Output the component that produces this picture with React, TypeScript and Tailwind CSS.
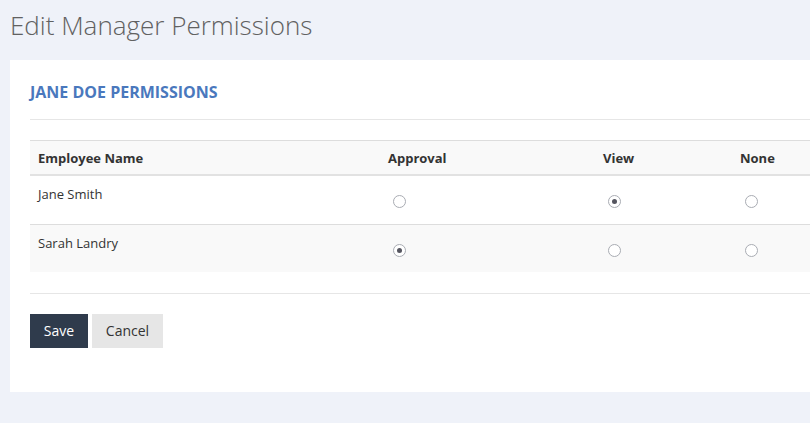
import React from "react";

const Radio = ({ checked }: { checked?: boolean }) => (
  <div className="ml-[5px] mt-[11px] w-[13px] h-[13px] rounded-full border border-[#a9acb3] bg-white flex items-center justify-center">
    {checked && <div className="w-[5px] h-[5px] rounded-full bg-[#55555f]" />}
  </div>
);

const rows = [
  { name: "Jane Smith", sel: 1, bg: "bg-white" },
  { name: "Sarah Landry", sel: 0, bg: "bg-[#f9f9f9]" },
];

export default function App() {
  return (
    <div
      className="w-[810px] h-[423px] overflow-hidden bg-[#eff2f9] text-[#333]"
      style={{ fontFamily: '"Open Sans", sans-serif' }}
    >
      <h1 className="pl-[10px] pt-[6px] h-[60px] text-[26px] font-light text-[#616161] leading-[38px]">
        Edit Manager Permissions
      </h1>
      <div className="ml-[10px] w-[900px] h-[332px] bg-white px-[20px] pt-[21px]">
        <div className="h-[38px] border-b border-[#e6e6e6] box-content text-[16px] font-bold text-[#4a78bd] leading-[22px]">
          JANE DOE PERMISSIONS
        </div>
        <div className="mt-[20px] border-t border-[#dddddd]">
          <div className="flex h-[35px] bg-[#f9f9f9] border-b-2 border-[#e2e2e2] text-[13px] font-bold leading-[18px] text-[#333]">
            <div className="w-[350px] pl-[8px] pt-[8px]">Employee Name</div>
            <div className="w-[215px] pl-[8px] pt-[8px]">Approval</div>
            <div className="w-[137px] pl-[8px] pt-[8px]">View</div>
            <div className="w-[150px] pl-[8px] pt-[8px]">None</div>
          </div>
          {rows.map((r, i) => (
            <div
              key={r.name}
              className={`flex h-[48px] ${r.bg} ${i > 0 ? "border-t border-[#dddddd]" : ""} text-[13px] leading-[20px] text-[#333]`}
            >
              <div className="w-[350px] pl-[8px] pt-[8px]">{r.name}</div>
              <div className="w-[215px] pl-[8px] pt-[8px]">
                <Radio checked={r.sel === 0} />
              </div>
              <div className="w-[137px] pl-[8px] pt-[8px]">
                <Radio checked={r.sel === 1} />
              </div>
              <div className="w-[150px] pl-[8px] pt-[8px]">
                <Radio checked={r.sel === 2} />
              </div>
            </div>
          ))}
        </div>
        <div className="mt-[21px] border-t border-[#e6e6e6]" />
        <div className="mt-[20px] flex gap-[4px]">
          <button className="h-[34px] w-[58px] bg-[#2f3b4c] text-white text-[14px] leading-[20px]">
            Save
          </button>
          <button className="h-[34px] w-[71px] bg-[#e6e6e6] text-[#333] text-[14px] leading-[20px]">
            Cancel
          </button>
        </div>
      </div>
    </div>
  );
}
